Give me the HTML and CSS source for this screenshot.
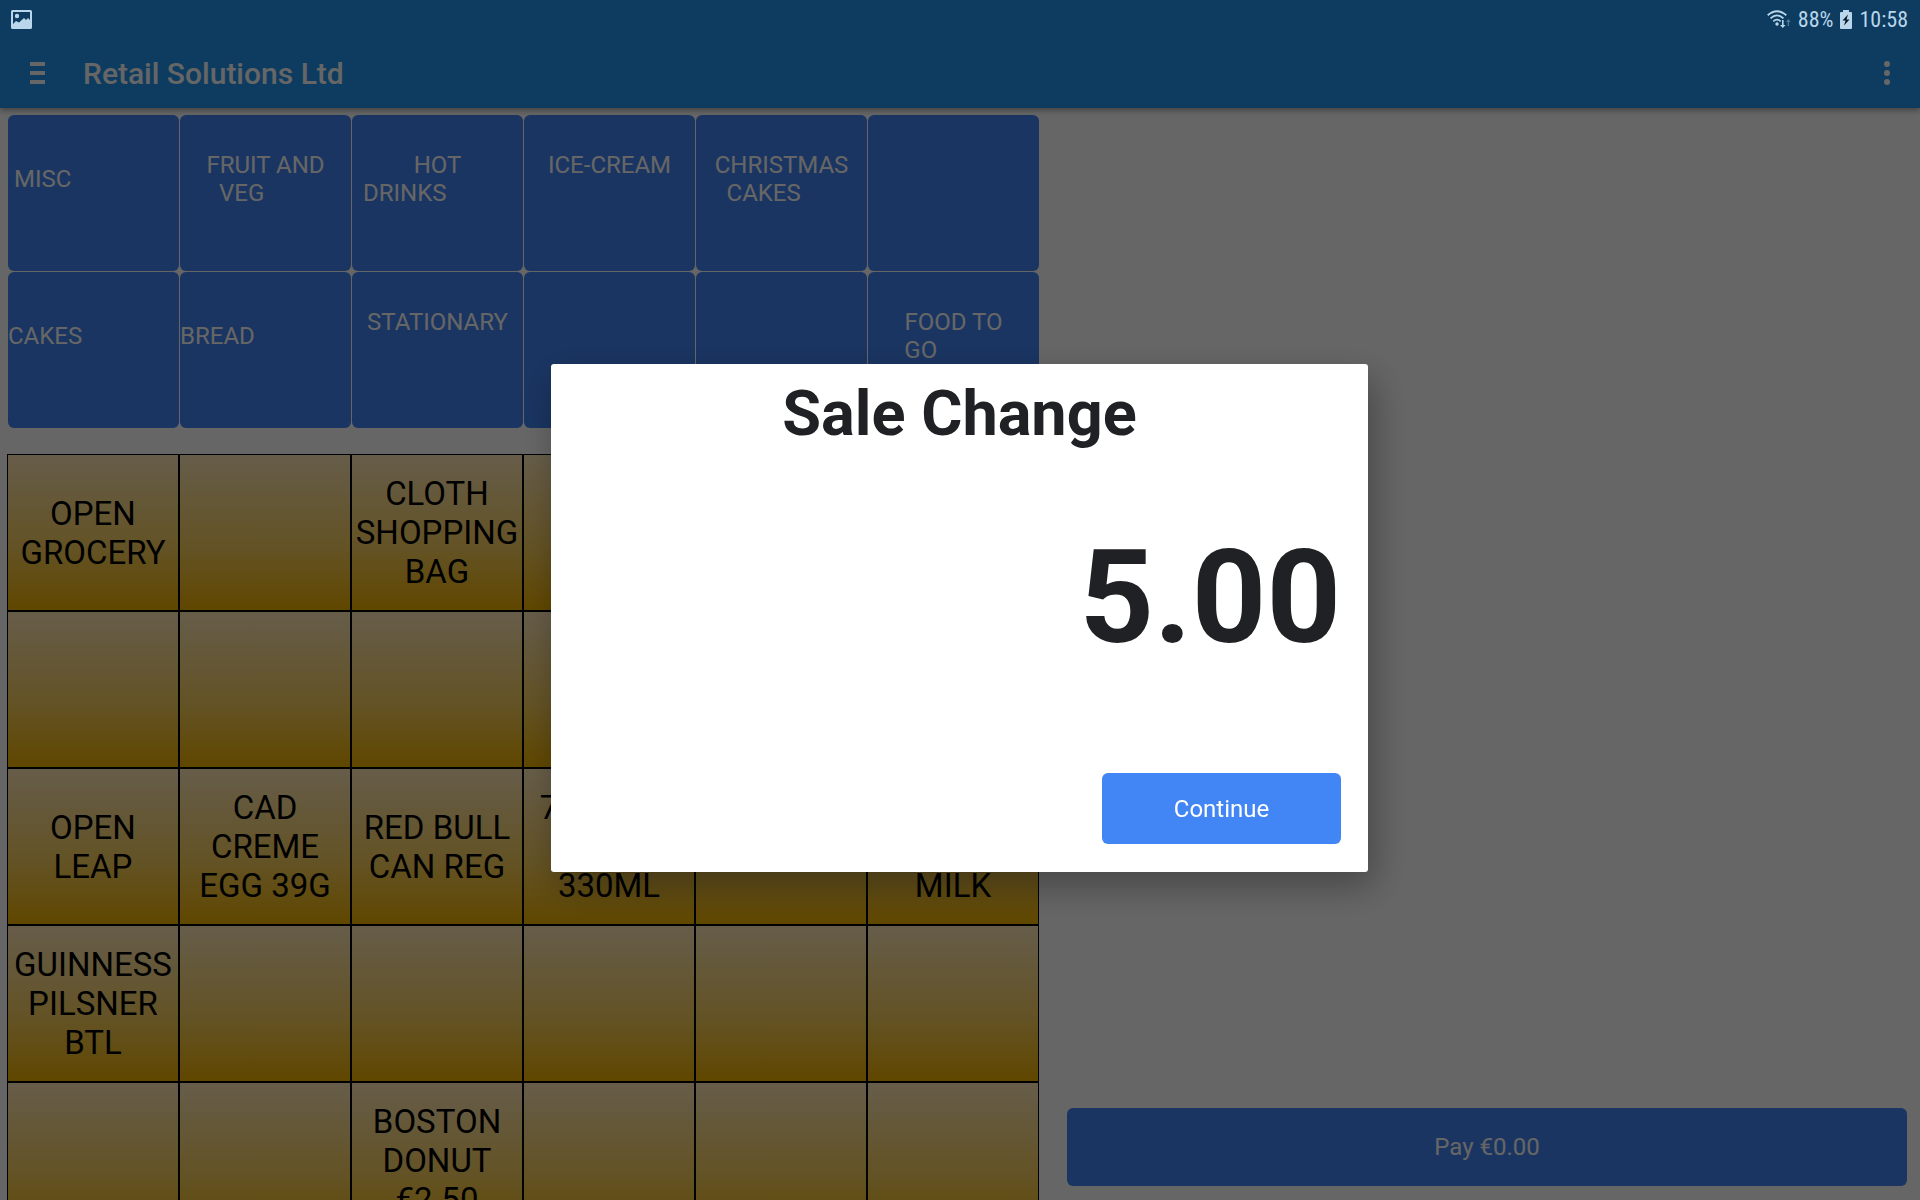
FILE: index.html
```html
<!DOCTYPE html>
<html lang="en">
  <head>
    <meta charset="UTF-8" />
    <meta name="viewport" content="width=device-width, initial-scale=1.0" />
    <title>Retail Solutions Ltd</title>
    <link rel="stylesheet" href="styles.css">
  </head>
  <body>
    <div class="status-bar">
      <svg class="picture-icon" width="21" height="19" viewBox="0 0 21 19">
        <path fill-rule="evenodd" d="M1.500 0h18a1.500 1.500 0 0 1 1.500 1.500v16a1.500 1.500 0 0 1-1.500 1.500h-18A1.500 1.500 0 0 1 0 17.500v-16A1.500 1.500 0 0 1 1.500 0zM2 2v12l3-3 3 1.500L13 8l2 2 2-2 2 2V2z" />
        <circle cx="6" cy="6" r="2.200" />
      </svg>
      <div class="status-right">
        <svg class="wifi-icon" width="24" height="19" viewBox="0 0 24 19">
          <g fill="none" stroke="currentColor" stroke-width="1.800">
            <path d="M0.700 5.200Q10 -2.800 19.300 5.200" />
            <path d="M3.500 8.300Q10 2.500 16.500 8.300" />
            <path d="M6.300 11.300Q10 8 13.700 11.300" />
          </g>
          <circle cx="10" cy="14" r="1.700" />
          <path d="M15 10h1.600v5h2L15.800 18 13 15h2z" />
          <path opacity=".4" d="M20.700 16h1.300v-4h1.700L21.300 9 19 12h1.700z" />
        </svg>
        <span>88%</span>
        <svg class="battery-icon" width="12" height="19" viewBox="0 0 12 19">
          <path d="M3 0h6v2h2a1 1 0 0 1 1 1v15a1 1 0 0 1-1 1H1a1 1 0 0 1-1-1V3a1 1 0 0 1 1-1h2z" />
          <path class="bolt" d="M8 4.500L2.500 10.500h3L4 15.500l5.500-6h-3z" />
        </svg>
        <span>10:58</span>
      </div>
    </div>

    <header class="toolbar">
      <button class="icon-btn" aria-label="Menu">
        <svg width="15" height="22" viewBox="0 0 15 22">
          <path d="M0 0h15v4H0zM0 9h15v4H0zM0 18h15v4H0z" />
        </svg>
      </button>
      <h1>Retail Solutions Ltd</h1>
      <button class="icon-btn more" aria-label="More options">
        <svg width="6" height="24" viewBox="0 0 6 24">
          <circle cx="3" cy="3" r="3" />
          <circle cx="3" cy="12" r="3" />
          <circle cx="3" cy="21" r="3" />
        </svg>
      </button>
    </header>

    <main class="till">
      <section class="keys">
        <div class="departments">
          <button class="dept short">&nbsp;MISC<br>&nbsp;</button>
          <button class="dept">FRUIT AND<br>VEG&nbsp;&nbsp;&nbsp;&nbsp;&nbsp;&nbsp;&nbsp;&nbsp;<br>&nbsp;</button>
          <button class="dept">HOT<br>DRINKS&nbsp;&nbsp;&nbsp;&nbsp;&nbsp;&nbsp;&nbsp;&nbsp;&nbsp;&nbsp;&nbsp;<br>&nbsp;</button>
          <button class="dept">ICE-CREAM<br>&nbsp;<br>&nbsp;</button>
          <button class="dept">CHRISTMAS<br>CAKES&nbsp;&nbsp;&nbsp;&nbsp;&nbsp;&nbsp;<br>&nbsp;</button>
          <button class="dept"></button>
          <button class="dept short">CAKES<br>&nbsp;</button>
          <button class="dept short">BREAD<br>&nbsp;</button>
          <button class="dept">STATIONARY<br>&nbsp;<br>&nbsp;</button>
          <button class="dept"></button>
          <button class="dept"></button>
          <button class="dept">FOOD TO<br>GO&nbsp;&nbsp;&nbsp;&nbsp;&nbsp;&nbsp;&nbsp;&nbsp;&nbsp;&nbsp;&nbsp;<br>&nbsp;</button>
        </div>

        <div class="products">
          <button class="product">OPEN GROCERY</button>
          <button class="product"></button>
          <button class="product">CLOTH SHOPPING BAG</button>
          <button class="product"></button>
          <button class="product"></button>
          <button class="product"></button>

          <button class="product"></button>
          <button class="product"></button>
          <button class="product"></button>
          <button class="product"></button>
          <button class="product"></button>
          <button class="product"></button>

          <button class="product">OPEN<br>LEAP</button>
          <button class="product">CAD CREME EGG 39G</button>
          <button class="product">RED BULL CAN REG</button>
          <button class="product">7UP DIET<br>CAN<br>330ML</button>
          <button class="product"></button>
          <button class="product">&nbsp;<br>&nbsp;<br>MILK</button>

          <button class="product">GUINNESS PILSNER BTL</button>
          <button class="product"></button>
          <button class="product"></button>
          <button class="product"></button>
          <button class="product"></button>
          <button class="product"></button>

          <button class="product"></button>
          <button class="product"></button>
          <button class="product">BOSTON DONUT €2.50</button>
          <button class="product"></button>
          <button class="product"></button>
          <button class="product"></button>
        </div>
      </section>

      <section class="basket">
        <button class="pay">Pay €0.00</button>
      </section>
    </main>

    <div class="backdrop">
      <div class="modal" role="dialog" aria-modal="true" aria-labelledby="modalTitle">
        <h2 id="modalTitle">Sale Change</h2>
        <div class="amount">5.00</div>
        <button class="continue">Continue</button>
      </div>
    </div>
  </body>
</html>
```
FILE: styles.css
```css
* {
  box-sizing: border-box;
}

body {
  margin: 0;
  height: 100vh;
  display: flex;
  flex-direction: column;
  overflow: hidden;
  background: #fff;
  font-family: Roboto, "Liberation Sans", sans-serif;
}

button {
  margin: 0;
  padding: 0;
  border: none;
  font-family: inherit;
  cursor: pointer;
}

svg {
  display: block;
  fill: currentColor;
}

/* System status bar, stays above the backdrop */
.status-bar {
  position: relative;
  z-index: 20;
  flex: none;
  display: flex;
  justify-content: space-between;
  align-items: center;
  height: 38px;
  padding: 0 12px 0 11px;
  background: #0d3c60;
  color: #b9d6ea;
  font-family: "Roboto Condensed", Roboto, sans-serif;
  font-size: 22px;
}

.status-right {
  display: flex;
  align-items: center;
  gap: 7px;
}

.battery-icon .bolt {
  fill: #06192a;
}

.toolbar {
  position: relative;
  z-index: 1;
  flex: none;
  display: flex;
  align-items: center;
  height: 70px;
  padding: 0 30px;
  background: #2196f0;
  color: #fff;
  box-shadow: 0 2px 6px rgba(0, 0, 0, 0.4);
}

.toolbar h1 {
  margin: 0 0 0 38px;
  font-size: 30px;
  font-weight: 500;
}

.icon-btn {
  background: none;
  color: inherit;
}

.more {
  margin-left: auto;
}

.till {
  flex: 1;
  min-height: 0;
  display: grid;
  grid-template-columns: 43fr 35fr;
  gap: 28px;
  padding: 7px 13px 0 7px;
}

.keys {
  min-height: 0;
  overflow: hidden;
}

.departments {
  display: grid;
  grid-template-columns: repeat(6, 1fr);
  grid-auto-rows: 156px;
  gap: 1px;
  margin: 0 0 26px 1px;
}

.dept {
  border-radius: 6px;
  background: #4285f4;
  color: #fff;
  font-size: 24px;
  line-height: 28px;
  text-align: center;
}

.dept.short {
  text-align: left;
}

.products {
  display: grid;
  grid-template-columns: repeat(6, 1fr);
  grid-auto-rows: 157px;
}

.product {
  min-width: 0;
  border: 1px solid #000;
  background: linear-gradient(#ffe8b8, #f8ce5c 60%, #f0b200);
  color: #000;
  font-size: 33px;
  line-height: 39px;
}

.basket {
  display: flex;
  align-items: flex-end;
  padding-bottom: 14px;
}

.pay,
.continue {
  border-radius: 6px;
  background: #4285f4;
  color: #fff;
  font-size: 24px;
}

.pay {
  width: 100%;
  height: 78px;
}

.backdrop {
  position: fixed;
  inset: 0;
  z-index: 10;
  display: flex;
  align-items: center;
  justify-content: center;
  padding: 36px 1px 0 0;
  background: rgba(0, 0, 0, 0.6);
}

.modal {
  display: flex;
  flex-direction: column;
  width: 43%;
  max-width: 817px;
  padding: 12px 27px 28px;
  border-radius: 3px;
  background: #fff;
  color: #202124;
  box-shadow: 6px 14px 36px rgba(0, 0, 0, 0.32);
}

.modal h2 {
  margin: 0;
  font-size: 63px;
  line-height: 76px;
  text-align: center;
}

.amount {
  margin: 70px 0 100px;
  font-size: 130px;
  line-height: 151px;
  font-weight: bold;
  text-align: right;
}

.continue {
  align-self: flex-end;
  width: 239px;
  height: 71px;
}
```
